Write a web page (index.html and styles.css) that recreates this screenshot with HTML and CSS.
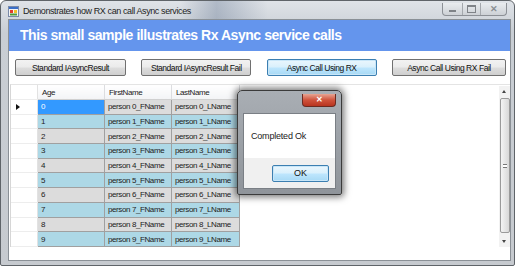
FILE: index.html
```html
<!DOCTYPE html>
<html lang="en">
<head>
<meta charset="UTF-8">
<title>Demonstrates how RX can call Async services</title>
<link rel="stylesheet" href="styles.css">
</head>
<body>

<div class="window">
    <div class="titlebar">
        <svg class="app-icon" width="11" height="11" viewBox="0 0 11 11">
            <rect x="0.5" y="0.5" width="10" height="10" fill="#f4f4f4" stroke="#7a8aa8"/>
            <rect x="1" y="1" width="9" height="2" fill="#3a6fc9"/>
            <rect x="2" y="4" width="3" height="3" fill="#e23b2e"/>
            <rect x="6" y="4" width="3" height="3" fill="#f2c22a"/>
            <rect x="2" y="7.5" width="7" height="2" fill="#4f9a3c"/>
        </svg>
        <span class="title">Demonstrates how RX can call Async services</span>
        <div class="caption-buttons">
            <span class="cap min"><i></i></span>
            <span class="cap max"><i></i></span>
            <span class="cap close">&#x2715;</span>
        </div>
    </div>

    <div class="client">
        <div class="banner">This small sample illustrates Rx Async service calls</div>

        <div class="actions">
            <button class="btn w111">Standard IAsyncResult</button>
            <button class="btn w110">Standard IAsyncResult Fail</button>
            <button class="btn w110 focused">Async Call Using RX</button>
            <button class="btn w114">Async Call Using RX Fail</button>
        </div>

        <div class="grid">
            <table class="people">
                <thead>
                    <tr>
                        <th class="rowhead"></th>
                        <th class="c-age">Age</th>
                        <th class="c-first">FirstName</th>
                        <th class="c-last">LastName</th>
                    </tr>
                </thead>
                <tbody id="rows"></tbody>
            </table>
            <div class="scrollbar">
                <span class="arrow up"></span>
                <span class="thumb"><b></b></span>
                <span class="arrow down"></span>
            </div>
        </div>
    </div>
</div>

<!-- message box shown over the form -->
<div class="msgbox">
    <div class="msg-title">
        <span class="msg-close">&#x2715;</span>
    </div>
    <div class="msg-body">Completed Ok</div>
    <div class="msg-foot">
        <button class="ok">OK</button>
    </div>
</div>

<script>
    const rows = document.getElementById('rows');

    for (let i = 0; i < 10; i++) {
        const tr = document.createElement('tr');
        tr.className = i % 2 === 0 ? 'even' : 'odd';
        if (i === 0) tr.classList.add('current');
        tr.innerHTML =
            '<td class="rowhead">' + (i === 0 ? '<span class="pointer"></span>' : '') + '</td>' +
            '<td class="c-age">' + i + '</td>' +
            '<td>person ' + i + '_FName</td>' +
            '<td>person ' + i + '_LName</td>';
        rows.appendChild(tr);
    }
</script>

</body>
</html>
```

FILE: styles.css
```css
body {
    margin: 0;
    background: #ffffff;
    font-family: "Liberation Sans", Arial, sans-serif;
}
.window {
    width: 515px;
    height: 266px;
    box-sizing: border-box;
    border: 1px solid #5f6469;
    border-radius: 6px 6px 2px 2px;
    background: linear-gradient(to bottom, #dfe3e8 0%, #c9ced4 12%, #c6cacf 100%);
    display: flex;
    flex-direction: column;
}
.titlebar {
    height: 21px;
    display: flex;
    align-items: center;
    position: relative;
    background: linear-gradient(to right, rgba(255,255,255,0) 35%, rgba(90,110,140,0.35) 42%, rgba(255,255,255,0) 52%);
}
.app-icon {
    margin-left: 7px;
    margin-top: 2px;
}
.title {
    margin-left: 4px;
    margin-top: 2px;
    font-size: 9px;
    letter-spacing: -0.4px;
    color: #1e1e1e;
}
.caption-buttons {
    position: absolute;
    right: 7px;
    top: 2px;
    display: flex;
    height: 12px;
    border: 1px solid #8c9096;
    border-top: none;
    border-radius: 0 0 4px 4px;
    background: linear-gradient(to bottom, #e9ecef, #cdd1d6);
}
.cap {
    display: flex;
    align-items: center;
    justify-content: center;
    color: #8b8f94;
    font-size: 9px;
}
.cap + .cap {
    border-left: 1px solid #a4a8ad;
}
.min {
    width: 19px;
}
.min i {
    width: 7px;
    height: 2px;
    margin-top: 4px;
    background: #7f8388;
}
.max {
    width: 17px;
}
.max i {
    width: 7px;
    height: 5px;
    border: 1px solid #7f8388;
    border-top-width: 2px;
}
.close {
    width: 25px;
    font-weight: bold;
}
.client {
    flex: 1;
    margin: 0 3px 4px 7px;
    background: #ffffff;
    border: 1px solid #8a9096;
    display: flex;
    flex-direction: column;
}
.banner {
    height: 31px;
    background: #6495ed;
    color: #ffffff;
    font-weight: bold;
    font-size: 14px;
    letter-spacing: -0.45px;
    line-height: 31px;
    padding-left: 11px;
    white-space: nowrap;
}
.actions {
    display: flex;
    justify-content: space-between;
    margin: 8px 4px 0 6px;
}
.btn {
    height: 17px;
    padding: 0;
    border: 1px solid #707070;
    border-radius: 2px;
    background: linear-gradient(to bottom, #f2f2f2 0%, #ebebeb 48%, #dddddd 52%, #cfcfcf 100%);
    font-family: "Liberation Sans", Arial, sans-serif;
    font-size: 8.5px;
    letter-spacing: -0.45px;
    color: #111111;
}
.btn.focused {
    border-color: #3c7fb1;
    background: linear-gradient(to bottom, #eaf6fd 0%, #d9f0fc 48%, #bee6fd 52%, #a7d9f5 100%);
    box-shadow: inset 0 0 0 1px #c8e6f8;
}
.w110 { width: 110px; }
.w111 { width: 111px; }
.w114 { width: 114px; }
.grid {
    flex: 1;
    margin: 8px 0 13px 1px;
    display: flex;
    justify-content: space-between;
    align-items: flex-start;
    border-left: 1px solid #d6d6d6;
    border-top: 1px solid #e4e4e4;
}
.people {
    border-collapse: collapse;
    table-layout: fixed;
    width: 227px;
    font-size: 8px;
    letter-spacing: -0.4px;
    color: #222222;
}
.people th {
    height: 14px;
    padding: 0 0 0 4px;
    text-align: left;
    font-weight: normal;
    background: linear-gradient(to bottom, #ffffff, #f3f4f6);
    border-right: 1px solid #dcdde0;
    border-bottom: 1px solid #d0d0d0;
}
.people td {
    height: 13.7px;
    padding: 0 0 0 3px;
    border: 1px solid #a0a0a0;
    white-space: nowrap;
    overflow: hidden;
}
.c-age { width: 62px; }
.c-first { width: 62px; }
.c-last { width: 63px; }
.people .even td {
    background: #dcdcdc;
}
.people .odd td {
    background: #add8e6;
}
.people .current .c-age {
    background: #3399ff;
    color: #ffffff;
}
.people th.rowhead,
.people tr td.rowhead {
    width: 26px;
    padding: 0;
    background: #ffffff;
    border: none;
    border-right: 1px solid #e2e2e2;
    border-bottom: 1px solid #ededed;
    position: relative;
}
.pointer {
    position: absolute;
    left: 5px;
    top: 4px;
    border-left: 4px solid #111111;
    border-top: 3px solid transparent;
    border-bottom: 3px solid transparent;
}
.scrollbar {
    width: 11px;
    height: 161px;
    margin-top: 1px;
    background: #f2f2f2;
    display: flex;
    flex-direction: column;
    align-items: center;
}
.arrow {
    height: 11px;
    width: 11px;
    position: relative;
}
.arrow::after {
    content: "";
    position: absolute;
    left: 3px;
    border-left: 2.5px solid transparent;
    border-right: 2.5px solid transparent;
}
.up::after {
    top: 4px;
    border-bottom: 3px solid #444444;
}
.down::after {
    top: 4px;
    border-top: 3px solid #444444;
}
.thumb {
    flex: 1;
    width: 8px;
    margin: 1px 0 3px;
    border: 1px solid #9a9a9a;
    border-radius: 2px;
    background: linear-gradient(to right, #f4f4f4, #d8d8d8);
    display: flex;
    align-items: center;
    justify-content: center;
}
.thumb b {
    width: 4px;
    height: 4px;
    border-top: 1px solid #777777;
    border-bottom: 1px solid #777777;
    box-sizing: border-box;
    box-shadow: inset 0 1px 0 #ffffff, inset 0 -1px 0 #ffffff;
    background: #777777;
}
.msgbox {
    position: absolute;
    left: 237px;
    top: 90px;
    width: 105px;
    height: 105px;
    box-sizing: border-box;
    border: 1px solid #3b3b3b;
    border-radius: 5px 5px 2px 2px;
    background: linear-gradient(to bottom, #a9aeb4, #8f949a);
    box-shadow: 0 0 7px 2px rgba(0, 0, 0, 0.55);
    display: flex;
    flex-direction: column;
    padding: 0 5px 5px 5px;
}
.msg-title {
    height: 22px;
    display: flex;
    justify-content: flex-end;
    align-items: flex-start;
}
.msg-close {
    width: 32px;
    height: 12px;
    margin-top: 3px;
    border: 1px solid #6b2a20;
    border-top: none;
    border-radius: 0 0 4px 4px;
    background: linear-gradient(to bottom, #e8a493 0%, #d0533c 50%, #b8341f 100%);
    color: #ffffff;
    font-size: 8px;
    font-weight: bold;
    text-align: center;
    line-height: 12px;
}
.msg-body {
    height: 44px;
    background: #ffffff;
    border: 1px solid #7a7f85;
    border-bottom: none;
    font-size: 9px;
    letter-spacing: -0.2px;
    color: #222222;
    padding-left: 7px;
    line-height: 44px;
}
.msg-foot {
    flex: 1;
    background: #f0f0f0;
    border: 1px solid #7a7f85;
    border-top: none;
    display: flex;
    justify-content: flex-end;
    align-items: center;
    padding-right: 6px;
}
.ok {
    width: 57px;
    height: 17px;
    padding: 0;
    border: 1px solid #3c7fb1;
    border-radius: 2px;
    background: linear-gradient(to bottom, #eaf6fd 0%, #d9f0fc 48%, #bee6fd 52%, #a7d9f5 100%);
    box-shadow: inset 0 0 0 1px #c8e6f8;
    font-family: "Liberation Sans", Arial, sans-serif;
    font-size: 9px;
    color: #111111;
}
```
